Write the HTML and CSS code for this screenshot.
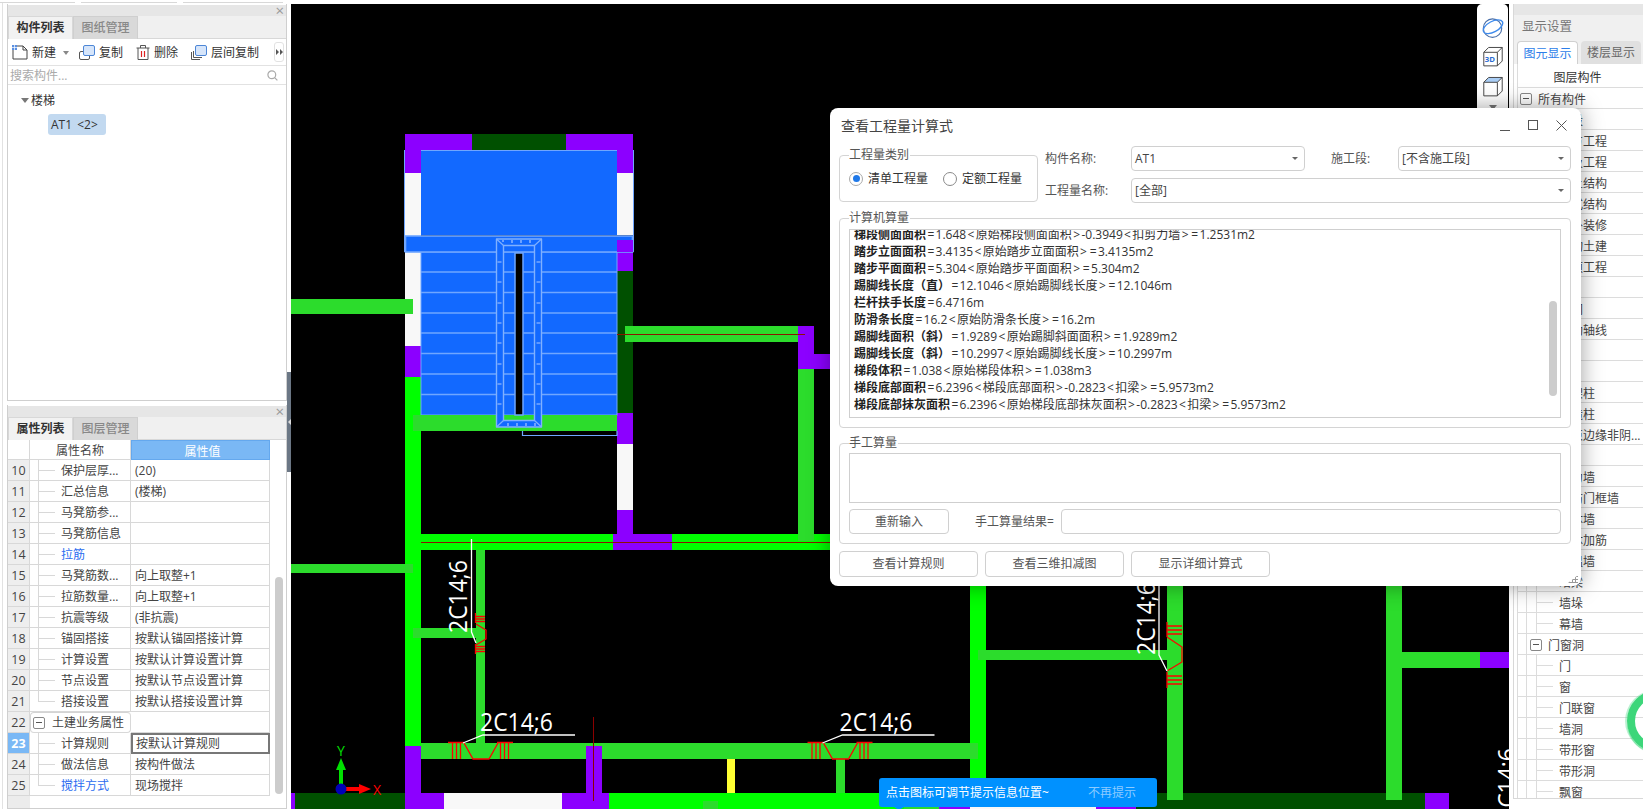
FILE: index.html
```html
<!DOCTYPE html>
<html lang="zh-CN">
<head>
<meta charset="utf-8">
<title>查看工程量计算式</title>
<link rel="stylesheet" href="styles.css">
</head>
<body>
<div class="app">
  <aside class="left">
    <div class="top-ticks"><i class="t1"></i><i class="t2"></i><i class="t3"></i></div>
    <section class="panel list-panel">
      <div class="dock-bar"><span class="dock-x">×</span></div>
      <div class="tabs"><span class="tab on">构件列表</span><span class="tab">图纸管理</span></div>
      <div class="tools">
        <span class="tool tool-new">
          <svg width="16" height="15" viewBox="0 0 16 15"><path d="M1 3V14H15V5L11 1H4" fill="#fff" stroke="#444"/><path d="M11 1V5H15" fill="none" stroke="#444"/><rect x="0" y="0" width="5" height="5" fill="#5b8fe0"/><path d="M0 2.5H5M2.5 0V5" stroke="#fff" stroke-width=".7"/></svg>
          新建<i class="tool-caret"></i>
        </span>
        <span class="tool tool-copy">
          <svg width="16" height="15" viewBox="0 0 16 15"><rect x=".5" y="6.5" width="10" height="8" rx="1.5" fill="#fff" stroke="#555"/><rect x="4.5" y=".5" width="11" height="10" rx="1.5" fill="#d6e5fa" stroke="#4d86d6"/></svg>
          复制
        </span>
        <span class="tool tool-del">
          <svg width="14" height="15" viewBox="0 0 14 15"><path d="M.5 3H13.5M4.5 3V.5H9.5V3M2 3V14.5H12V3" fill="none" stroke="#555"/><path d="M5.5 6V12M8.5 6V12" stroke="#d22" stroke-width="1.2"/></svg>
          删除
        </span>
        <span class="tool">
          <svg width="16" height="15" viewBox="0 0 16 15"><path d="M.5 7V14.5H9M2.5 6V12.5H11" fill="none" stroke="#555"/><rect x="4.5" y=".5" width="11" height="10" rx="1.5" fill="#d6e5fa" stroke="#4d86d6"/></svg>
          层间复制
        </span>
        <span class="more"><svg width="7" height="6" viewBox="0 0 7 6"><path d="M0 0L3 3L0 6ZM4 0L7 3L4 6Z" fill="#555"/></svg></span>
      </div>
      <div class="search"><span>搜索构件...</span>
        <svg width="11" height="11" viewBox="0 0 11 11"><circle cx="4.8" cy="4.8" r="3.9" fill="none" stroke="#aaa" stroke-width="1.2"/><path d="M7.6 7.6L10.4 10.4" stroke="#aaa" stroke-width="1.2"/></svg>
      </div>
      <div class="tree">
        <div class="tree-head"><i class="down"></i>楼梯</div>
        <div class="tree-item">AT1 &lt;2&gt;</div>
      </div>
    </section>
    <section class="panel prop-panel">
      <div class="dock-bar"><span class="dock-x">×</span></div>
      <div class="tabs"><span class="tab on">属性列表</span><span class="tab">图层管理</span></div>
      <div class="prop-body">
        <div class="prop-table">
          <div class="pr head"><span class="no"></span><span class="nm">属性名称</span><span class="val">属性值</span></div>
          <div class="pr"><span class="no">10</span><span class="nm leaf">保护层厚...</span><span class="val">(20)</span></div>
          <div class="pr"><span class="no">11</span><span class="nm leaf">汇总信息</span><span class="val">(楼梯)</span></div>
          <div class="pr"><span class="no">12</span><span class="nm leaf">马凳筋参...</span><span class="val"></span></div>
          <div class="pr"><span class="no">13</span><span class="nm leaf">马凳筋信息</span><span class="val"></span></div>
          <div class="pr"><span class="no">14</span><span class="nm leaf link">拉筋</span><span class="val"></span></div>
          <div class="pr"><span class="no">15</span><span class="nm leaf">马凳筋数...</span><span class="val">向上取整+1</span></div>
          <div class="pr"><span class="no">16</span><span class="nm leaf">拉筋数量...</span><span class="val">向上取整+1</span></div>
          <div class="pr"><span class="no">17</span><span class="nm leaf">抗震等级</span><span class="val">(非抗震)</span></div>
          <div class="pr"><span class="no">18</span><span class="nm leaf">锚固搭接</span><span class="val">按默认锚固搭接计算</span></div>
          <div class="pr"><span class="no">19</span><span class="nm leaf">计算设置</span><span class="val">按默认计算设置计算</span></div>
          <div class="pr"><span class="no">20</span><span class="nm leaf">节点设置</span><span class="val">按默认节点设置计算</span></div>
          <div class="pr"><span class="no">21</span><span class="nm leaf last">搭接设置</span><span class="val">按默认搭接设置计算</span></div>
          <div class="pr"><span class="no">22</span><span class="nm group"><i class="box"></i>土建业务属性</span><span class="val"></span></div>
          <div class="pr"><span class="no sel">23</span><span class="nm leaf">计算规则</span><span class="val editing">按默认计算规则</span></div>
          <div class="pr"><span class="no">24</span><span class="nm leaf">做法信息</span><span class="val">按构件做法</span></div>
          <div class="pr"><span class="no">25</span><span class="nm leaf last link">搅拌方式</span><span class="val">现场搅拌</span></div>
          <div class="pr foot"><span class="no"></span></div>
        </div>
        <div class="vbar"></div>
      </div>
    </section>
    <div class="split"><i></i></div>
  </aside>

  <svg class="canvas" width="1218" height="805" viewBox="291 4 1218 805">
    <g fill="#8c00ff">
      <rect x="405" y="134" width="67" height="16"/><rect x="405" y="134" width="16" height="39"/>
      <rect x="566" y="134" width="67" height="16"/><rect x="617" y="134" width="16" height="39"/>
      <rect x="405" y="346" width="16" height="31"/>
      <rect x="617" y="240" width="16" height="31"/><rect x="617" y="413" width="16" height="31"/><rect x="617" y="510" width="16" height="30"/>
      <rect x="798" y="326" width="16" height="43"/><rect x="814" y="354" width="20" height="15"/>
    </g>
    <g fill="#f8f8f8">
      <rect x="405" y="173" width="16" height="173"/><rect x="617" y="173" width="16" height="62"/><rect x="617" y="444" width="16" height="66"/>
    </g>
    <g fill="#005000">
      <rect x="472" y="134" width="94" height="16"/><rect x="617" y="271" width="16" height="142"/>
    </g>
    <rect x="405" y="377" width="16" height="369" fill="#00ff00"/>
    <path d="M404.5 150V252M633.5 150V252" fill="none" stroke="#6fa6ff"/>
    <rect x="421" y="150" width="196" height="85" fill="#1269ff"/>
    <path d="M421 150.5H617" stroke="#6fa6ff"/>
    <rect x="421" y="252" width="196" height="163" fill="#1269ff" stroke="#6fa6ff"/>
    <path d="M421 272H617M421 292.5H617M421 313H617M421 333H617M421 353.5H617M421 374H617M421 394.5H617" stroke="#6fa6ff" stroke-width="1.4"/>
    <rect x="405.5" y="236" width="227" height="16" fill="#1269ff" stroke="#6fa6ff" stroke-width="1.6"/>
    <rect x="617" y="240" width="16" height="12" fill="#8c00ff"/>
    <rect x="413" y="415" width="204" height="16" fill="#2cdc2c"/>
    <path d="M522.5 431V435.5H617V431" fill="none" stroke="#6fa6ff" stroke-width="1.2"/>
    <path d="M496.5 239H541.5V427H496.5ZM503.5 245.5V420.5H534.5V245.5Z" fill="#1269ff" fill-rule="evenodd" stroke="#7fb0ff" stroke-width="1.4" stroke-linejoin="round"/>
    <path d="M496.5 239L503.5 245.5M541.5 239L534.5 245.5M496.5 427L503.5 420.5M541.5 427L534.5 420.5" stroke="#7fb0ff" stroke-width="1.2"/>
    <path d="M497.5 262H501.5M497.5 282H501.5M497.5 303H501.5M497.5 323H501.5M497.5 343H501.5M497.5 364H501.5M497.5 384H501.5M497.5 404H501.5M536.5 262H540.5M536.5 282H540.5M536.5 303H540.5M536.5 323H540.5M536.5 343H540.5M536.5 364H540.5M536.5 384H540.5M536.5 404H540.5M503 242V240M512 243V240M521 243V240M530 243V240M508 426V423M517 426V423M526 426V423M535 426V423" stroke="#a9c8ff" stroke-width="1.2"/>
    <rect x="515" y="253" width="8" height="162" fill="#000" stroke="#6fa6ff" stroke-width="1.5"/>

    <rect x="291" y="299" width="122" height="15" fill="#2cdc2c"/>
    <rect x="625" y="326" width="173" height="16" fill="#2cdc2c"/>
    <path d="M617 334.5H805" stroke="#8b1500"/>
    <rect x="798" y="369" width="16" height="172" fill="#2cdc2c"/>

    <rect x="421" y="534" width="409" height="16" fill="#00ff00"/>
    <rect x="613" y="534" width="59" height="16" fill="#8c00ff"/>
    <rect x="798" y="534" width="16" height="7" fill="#2cdc2c"/>
    <path d="M421 542.5H830" stroke="#8b1500"/>
    <rect x="291" y="564" width="122" height="9" fill="#2cdc2c"/>
    <rect x="413" y="628" width="63" height="10" fill="#2cdc2c"/>
    <rect x="476" y="550" width="9" height="193" fill="#2cdc2c"/>
    <rect x="970" y="560" width="16" height="233" fill="#00ff00"/>
    <rect x="421" y="743" width="557" height="16" fill="#2cdc2c"/>
    <rect x="978" y="650" width="189" height="10" fill="#2cdc2c"/>
    <rect x="1167" y="560" width="16" height="240" fill="#2cdc2c"/>
    <rect x="1386" y="560" width="16" height="240" fill="#2cdc2c"/>
    <rect x="1402" y="652" width="78" height="16" fill="#2cdc2c"/>
    <rect x="1480" y="652" width="29" height="16" fill="#8c00ff"/>
    <rect x="727" y="759" width="8" height="34" fill="#ffff33"/>
    <rect x="836" y="759" width="9" height="42" fill="#2cdc2c"/>

    <rect x="291" y="793" width="4" height="16" fill="#8c00ff"/>
    <rect x="295" y="793" width="110" height="16" fill="#005000"/>
    <rect x="405" y="746" width="16" height="63" fill="#8c00ff"/>
    <rect x="421" y="793" width="23" height="16" fill="#8c00ff"/>
    <rect x="444" y="793" width="118" height="16" fill="#f8f8f8"/>
    <rect x="562" y="793" width="47" height="16" fill="#8c00ff"/>
    <rect x="586" y="746" width="16" height="47" fill="#8c00ff"/>
    <rect x="609" y="793" width="295" height="16" fill="#00ff00"/>
    <rect x="703" y="801" width="15" height="8" fill="#2cdc2c"/>
    <rect x="904" y="793" width="35" height="16" fill="#2cdc2c"/>
    <rect x="939" y="793" width="31" height="16" fill="#8c00ff"/>
    <rect x="970" y="793" width="126" height="16" fill="#f8f8f8"/>
    <rect x="1096" y="793" width="40" height="16" fill="#8c00ff"/>
    <rect x="1136" y="793" width="289" height="16" fill="#005000"/>
    <rect x="1425" y="793" width="24" height="16" fill="#8c00ff"/>
    <rect x="1167" y="793" width="16" height="7" fill="#2cdc2c"/>
    <rect x="1386" y="793" width="16" height="7" fill="#2cdc2c"/>
    <path d="M593.5 717V801" stroke="#8b0000"/>

    <defs>
      <g id="rebar-h" fill="none" stroke="#ff0000" stroke-width="1.3">
        <path d="M448 742.5H464M452.5 743V759M456.5 743V759M460.5 743V759"/>
        <path d="M497 742.5H513M500.5 743V759M504.5 743V759M508.5 743V759"/>
        <path d="M464 743L473 759H489L498 743"/>
        <path d="M463 743L483 735H575" stroke="#fff"/>
      </g>
    </defs>
    <use href="#rebar-h"/>
    <use href="#rebar-h" x="359.5"/>
    <g fill="none" stroke="#ff0000" stroke-width="1.3">
      <path d="M475.5 613V623M475 616.5H485M475 619H485M475 621.5H485"/>
      <path d="M476 624L486 630V639L476 645"/>
      <path d="M475.5 644V654M475 646.5H485M475 649H485M475 651.5H485"/>
      <path d="M1167 622V637M1167 626H1182M1167 630H1182M1167 634H1182"/>
      <path d="M1167 637L1182 647V662L1167 671"/>
      <path d="M1167 672V688M1167 676H1182M1167 680H1182M1167 684H1182"/>
    </g>
    <g fill="none" stroke="#fff" stroke-width="1.3">
      <path d="M471.5 539V632L476 643"/>
      <path d="M1159 540V655L1167 671"/>
    </g>
    <g class="cad-label" fill="#fff">
      <text x="480" y="731" textLength="73" lengthAdjust="spacingAndGlyphs">2C14;6</text>
      <text x="839.5" y="731" textLength="73" lengthAdjust="spacingAndGlyphs">2C14;6</text>
      <text transform="translate(467 633) rotate(-90)" textLength="73" lengthAdjust="spacingAndGlyphs">2C14;6</text>
      <text transform="translate(1155 655) rotate(-90)" textLength="73" lengthAdjust="spacingAndGlyphs">2C14;6</text>
      <text transform="translate(1516 821) rotate(-90)" textLength="73" lengthAdjust="spacingAndGlyphs">2C14;6</text>
    </g>
    <path d="M341 784V768" stroke="#00e000" stroke-width="4"/>
    <path d="M336 770H346L341 758Z" fill="#00e000"/>
    <path d="M346 789H361" stroke="#ff0000" stroke-width="4"/>
    <path d="M359 784V794L371 789Z" fill="#ff0000"/>
    <circle cx="341" cy="789" r="5.5" fill="#0000b8"/>
    <text class="axis" x="341" y="756" fill="#00e000" text-anchor="middle">Y</text>
    <text class="axis" x="377" y="795" fill="#ff0000" text-anchor="middle">X</text>
  </svg>

  <aside class="right">
    <div class="right-in">
      <div class="dock-bar"></div>
      <div class="r-title">显示设置</div>
      <div class="r-tabs"><span class="r-tab on">图元显示</span><span class="r-tab">楼层显示</span></div>
      <div class="r-grid">
        <div class="r-head">图层构件</div>
        <div class="r top"><i class="box"></i>所有构件</div>
        <div class="r l1">施工段</div>
        <div class="r l1">土石方工程</div>
        <div class="r l1">基础及工程</div>
        <div class="r l1">混凝土结构</div>
        <div class="r l1">装配式结构</div>
        <div class="r l1">室内外装修</div>
        <div class="r l1">构筑物土建</div>
        <div class="r l1">措施项工程</div>
        <div class="r l1"></div>
        <div class="r l2">轴网</div>
        <div class="r l2">辅助轴线</div>
        <div class="r l1"></div>
        <div class="r l1"></div>
        <div class="r l2">框架柱</div>
        <div class="r l2">构造柱</div>
        <div class="r l2">约束边缘非阴...</div>
        <div class="r l1"></div>
        <div class="r l2">剪力墙</div>
        <div class="r l2">人防门框墙</div>
        <div class="r l2">砌体墙</div>
        <div class="r l2">砌体加筋</div>
        <div class="r l2">保温墙</div>
        <div class="r l2">暗梁</div>
        <div class="r l2">墙垛</div>
        <div class="r l2">幕墙</div>
        <div class="r grp"><i class="box"></i>门窗洞</div>
        <div class="r l2">门</div>
        <div class="r l2">窗</div>
        <div class="r l2">门联窗</div>
        <div class="r l2">墙洞</div>
        <div class="r l2">带形窗</div>
        <div class="r l2">带形洞</div>
        <div class="r l2">飘窗</div>
      </div>
    </div>
  </aside>

  <div class="view-tools">
    <svg width="24" height="22" viewBox="0 0 24 22"><circle cx="11.5" cy="11.5" r="9.5" fill="none" stroke="#4a6fa8" stroke-width="1.2"/><ellipse cx="12" cy="10" rx="11" ry="5.5" transform="rotate(-28 12 10)" fill="none" stroke="#3f8bec" stroke-width="1.4"/></svg>
    <svg width="22" height="22" viewBox="0 0 22 22"><path d="M1.5 6.5L6.5 1.5H20.5V15.5L15.5 20.5H1.5ZM1.5 6.5H15.5V20.5M15.5 6.5L20.5 1.5" fill="#fff" stroke="#444" stroke-linejoin="round"/><text x="2.5" y="17" class="cube-text">3D</text></svg>
    <svg width="22" height="22" viewBox="0 0 22 22"><path d="M1.5 6.5L6.5 1.5H20.5L15.5 6.5Z" fill="#a9cdf5"/><path d="M1.5 6.5L6.5 1.5H20.5V15.5L15.5 20.5H1.5ZM1.5 6.5H15.5V20.5M15.5 6.5L20.5 1.5" fill="none" stroke="#444" stroke-linejoin="round"/></svg>
    <i class="down dark"></i>
  </div>

  <div class="ring"></div>

  <div class="dialog">
    <header class="dlg-head">
      <h1>查看工程量计算式</h1>
      <div class="win-btns">
        <svg width="10" height="11" viewBox="0 0 10 11"><path d="M0 10.5H10" stroke="#555"/></svg>
        <svg width="10" height="11" viewBox="0 0 10 11"><rect x=".5" y=".5" width="9" height="9" fill="none" stroke="#555"/></svg>
        <svg width="11" height="11" viewBox="0 0 11 11"><path d="M.5 .5L10.5 10.5M10.5 .5L.5 10.5" stroke="#555"/></svg>
      </div>
    </header>
    <div class="dlg-top">
      <div class="group kind">
        <span class="legend">工程量类别</span>
        <label class="radio"><i class="dot on"></i>清单工程量</label>
        <label class="radio"><i class="dot"></i>定额工程量</label>
      </div>
      <div class="form">
        <span>构件名称:</span>
        <div class="combo">AT1</div>
        <span class="lb2">施工段:</span>
        <div class="combo">[不含施工段]</div>
        <span>工程量名称:</span>
        <div class="combo wide">[全部]</div>
      </div>
    </div>
    <div class="group auto">
      <span class="legend">计算机算量</span>
      <div class="lines-box">
        <div class="lines">
          <p><b>梯段侧面面积</b><span class="op">=</span>1.648<span class="op">&lt;</span>原始梯段侧面面积<span class="op">&gt;</span>-0.3949<span class="op">&lt;</span>扣剪力墙<span class="op">&gt;</span><span class="op">=</span>1.2531m2</p>
          <p><b>踏步立面面积</b><span class="op">=</span>3.4135<span class="op">&lt;</span>原始踏步立面面积<span class="op">&gt;</span><span class="op">=</span>3.4135m2</p>
          <p><b>踏步平面面积</b><span class="op">=</span>5.304<span class="op">&lt;</span>原始踏步平面面积<span class="op">&gt;</span><span class="op">=</span>5.304m2</p>
          <p><b>踢脚线长度（直）</b><span class="op">=</span>12.1046<span class="op">&lt;</span>原始踢脚线长度<span class="op">&gt;</span><span class="op">=</span>12.1046m</p>
          <p><b>栏杆扶手长度</b><span class="op">=</span>6.4716m</p>
          <p><b>防滑条长度</b><span class="op">=</span>16.2<span class="op">&lt;</span>原始防滑条长度<span class="op">&gt;</span><span class="op">=</span>16.2m</p>
          <p><b>踢脚线面积（斜）</b><span class="op">=</span>1.9289<span class="op">&lt;</span>原始踢脚斜面面积<span class="op">&gt;</span><span class="op">=</span>1.9289m2</p>
          <p><b>踢脚线长度（斜）</b><span class="op">=</span>10.2997<span class="op">&lt;</span>原始踢脚线长度<span class="op">&gt;</span><span class="op">=</span>10.2997m</p>
          <p><b>梯段体积</b><span class="op">=</span>1.038<span class="op">&lt;</span>原始梯段体积<span class="op">&gt;</span><span class="op">=</span>1.038m3</p>
          <p><b>梯段底部面积</b><span class="op">=</span>6.2396<span class="op">&lt;</span>梯段底部面积<span class="op">&gt;</span>-0.2823<span class="op">&lt;</span>扣梁<span class="op">&gt;</span><span class="op">=</span>5.9573m2</p>
          <p><b>梯段底部抹灰面积</b><span class="op">=</span>6.2396<span class="op">&lt;</span>原始梯段底部抹灰面积<span class="op">&gt;</span>-0.2823<span class="op">&lt;</span>扣梁<span class="op">&gt;</span><span class="op">=</span>5.9573m2</p>
        </div>
        <div class="lines-bar"></div>
      </div>
    </div>
    <div class="group manual">
      <span class="legend">手工算量</span>
      <div class="memo"></div>
      <div class="manual-row">
        <span class="btn reinput">重新输入</span>
        <span class="result-lb">手工算量结果=</span>
        <div class="result"></div>
      </div>
    </div>
    <div class="dlg-btns">
      <span class="btn">查看计算规则</span>
      <span class="btn">查看三维扣减图</span>
      <span class="btn">显示详细计算式</span>
    </div>
    <div class="grip"></div>
  </div>

  <div class="toast"><span>点击图标可调节提示信息位置~</span><span class="toast-off">不再提示</span></div>
</div>
</body>
</html>
```
FILE: styles.css
```css
* { box-sizing: border-box; }
html, body { margin: 0; padding: 0; background: #fff; }
body { font: 12px/21px "Open Sans", "Noto Sans CJK SC", sans-serif; color: #444; }
i { font-style: normal; display: block; }

.app { position: relative; display: flex; width: 1643px; height: 809px; overflow: hidden; background: #fff; }

/* left column */
.left { position: relative; flex: none; width: 291px; height: 809px; display: flex; flex-direction: column; padding-left: 7px; background: #fff; }
.left::before { content: ""; position: absolute; left: 2px; top: 3px; bottom: 0; width: 1px; background: #e2e2e2; }
.top-ticks { position: absolute; left: 0; top: 0; display: flex; gap: 6px; }
.top-ticks i { height: 3px; border-bottom: 1px solid #d8d8d8; }
.t1 { width: 75px; } .t2 { width: 96px; } .t3 { width: 100px; }
.panel { width: 280px; border: 1px solid #cfcfcf; border-top: 0; background: #fff; }
.list-panel { height: 397px; margin-top: 4px; }
.prop-panel { height: 404px; margin-top: 4px; }
.dock-bar { position: relative; height: 11px; margin-top: 1px; background: #e6e6e6; }
.dock-x { position: absolute; right: 2px; top: -5px; color: #9a9a9a; font-size: 15px; line-height: 20px; }
.tabs { display: flex; height: 23px; background: #f0f0f0; border-bottom: 1px solid #d8d8d8; }
.tab { width: 65px; height: 23px; background: #d9d9d9; border: 1px solid #cfcfcf; border-bottom: 0; color: #888; text-align: center; line-height: 22px; font-weight: 500; }
.tab.on { background: #f2f2f2; color: #333; border-color: #d8d8d8; font-weight: 700; }

.tools { position: relative; display: flex; align-items: center; gap: 12px; height: 27px; padding: 1px 0 0 4px; border-bottom: 1px solid #e2e2e2; color: #333; }
.tool { display: flex; align-items: center; gap: 4px; }
.tool-new { margin-right: -2px; }
.tool-copy { margin-right: 1px; }
.tool-del { margin-right: 1px; }
.tool-caret { width: 0; height: 0; margin-left: 3px; border: 3px solid transparent; border-top: 4px solid #888; border-bottom: 0; }
.more { position: absolute; right: 2px; top: 3px; display: flex; align-items: center; justify-content: center; width: 10px; height: 20px; border: 1px solid #e2e2e2; border-radius: 3px; }
.search { display: flex; align-items: center; justify-content: space-between; height: 19px; padding: 1px 8px 0 2px; border-bottom: 1px solid #e2e2e2; color: #aaa; line-height: 18px; }
.tree { padding: 4px 0 0 13px; }
.down { width: 0; height: 0; border: 4px solid transparent; border-top: 5px solid #777; border-bottom: 0; }
.tree-head { display: flex; align-items: center; gap: 2px; height: 21px; padding-top: 1px; color: #333; }
.tree-item { width: 58px; height: 21px; margin: 4px 0 0 27px; padding-left: 3px; background: #c2d9f0; border-radius: 3px; color: #333; white-space: nowrap; word-spacing: 2px; }

/* property grid */
.prop-body { position: relative; }
.prop-table { width: 262px; }
.pr { display: grid; grid-template-columns: 22px 101px 139px; height: 21px; }
.pr > span { border-right: 1px solid #d8d8d8; border-bottom: 1px solid #d8d8d8; height: 21px; line-height: 22px; white-space: nowrap; overflow: hidden; }
.no { background: #eeeeee; text-align: center; font-size: 12.5px; color: #444; }
.no.sel { background: #7ab8f5; color: #fff; font-weight: 700; }
.nm { padding-left: 31px; }
.val { padding-left: 4px; }
.pr.head > span { height: 20px; line-height: 21px; }
.pr.head { height: 20px; }
.head .no { background: #fff; }
.head .nm { padding-left: 26px; }
.head .val { background: #7ab8f5; color: #fff; text-align: center; border: 1px solid #64a8ee; }
.leaf { background-image: linear-gradient(#d8d8d8, #d8d8d8), linear-gradient(#d8d8d8, #d8d8d8); background-size: 1px 100%, 16px 1px; background-position: 8px 0, 9px 10px; background-repeat: no-repeat; }
.leaf.last { background-size: 1px 11px, 16px 1px; }
.link { color: #2b6cf0; }
.nm.group { display: flex; align-items: center; gap: 7px; padding-left: 2px; padding-top: 1px; }
.box { position: relative; flex: none; width: 12px; height: 12px; border: 1px solid #888; border-radius: 2px; background: #fff; }
.box::after { content: ""; position: absolute; left: 2px; right: 2px; top: 4px; height: 1px; background: #555; }
.pr > .val.editing { border: 2px solid #777; line-height: 18px; padding-left: 3px; }
.pr.foot { height: 12px; }
.pr.foot .no { height: 12px; background: #ececec; border: 0; }
.vbar { position: absolute; left: 267px; top: 137px; width: 8px; height: 217px; background: #cccccc; border-radius: 4px; }

.split { position: absolute; left: 287px; top: 372px; width: 4px; height: 100px; background: #6b7785; }
.split i { position: absolute; left: 1px; top: 47px; width: 0; height: 0; border: 3px solid transparent; border-right: 3px solid #ddd; border-left: 0; }

/* canvas */
.canvas { flex: none; display: block; margin-top: 4px; background: #000; }
.cad-label text { font-family: "Open Sans", sans-serif; font-size: 25px; font-weight: 400; }
.axis { font-family: "Open Sans", sans-serif; font-size: 14px; }
.cube-text { font-family: "Open Sans", sans-serif; font-size: 8px; font-weight: 700; fill: #2a6cd0; }

/* right column */
.right { flex: none; width: 134px; height: 809px; padding: 4px 0 10px 4px; background: #fff; }
.right-in { height: 795px; border-left: 1px solid #d8d8d8; border-bottom: 1px solid #d8d8d8; overflow: hidden; background: #fff; }
.right-in .dock-bar { margin-top: 0; }
.r-title { height: 22px; padding-left: 8px; background: #f0f0f0; color: #777; line-height: 24px; font-size: 12.5px; }
.r-tabs { display: flex; gap: 3px; height: 27px; padding: 4px 0 0 3px; background: #f0f0f0; }
.r-tab { width: 60px; height: 23px; border-radius: 4px 4px 0 0; background: #e0e0e0; color: #666; text-align: center; line-height: 24px; }
.r-tab.on { width: 61px; background: #fff; color: #2b7de9; border: 1px solid #d0d0d0; border-bottom: 0; line-height: 23px; }
.r-grid { margin-left: 3px; border-left: 1px solid #dcdcdc; }
.r-head { height: 24px; border-bottom: 1px solid #dcdcdc; text-align: center; padding-right: 6px; line-height: 27px; color: #333; }
.r { display: flex; align-items: center; height: 21px; padding-top: 2px; border-bottom: 1px solid #dcdcdc; color: #444; white-space: nowrap; overflow: hidden; background-image: linear-gradient(#dcdcdc, #dcdcdc), linear-gradient(#dcdcdc, #dcdcdc), linear-gradient(#dcdcdc, #dcdcdc); background-repeat: no-repeat; background-size: 1px 100%, 1px 100%, 16px 1px; background-position: 8px 0, 18px 0, 19px 10px; }
.r.top { padding-left: 2px; gap: 6px; background-image: none; }
.r.l1 { padding-left: 29px; background-size: 1px 100%, 0 0, 14px 1px; background-position: 8px 0, 0 0, 9px 10px; }
.r.l2 { padding-left: 41px; }
.r.grp { padding-left: 12px; gap: 6px; background-size: 1px 100%, 0 0, 0 0; }

.view-tools { position: absolute; left: 1477px; top: 4px; width: 31px; height: 106px; display: flex; flex-direction: column; align-items: center; gap: 8px; padding-top: 13px; background: #fff; border-radius: 5px 5px 0 0; }

.ring { position: absolute; left: 1627px; top: 690px; width: 62px; height: 62px; border: 8px solid #3dd67a; border-radius: 50%; box-shadow: 0 2px 0 rgba(61, 214, 122, .45), -2px 0 0 rgba(61, 214, 122, .35); }

/* dialog */
.dialog { position: absolute; left: 830px; top: 108px; width: 751px; height: 478px; padding: 0 10px 0 9px; background: #fff; border-radius: 8px; box-shadow: 0 0 22px rgba(0, 0, 0, .38); }
.dlg-head { position: relative; display: flex; justify-content: space-between; height: 38px; padding: 9px 4px 0 2px; }
h1 { margin: 0; font-size: 14px; font-weight: 400; line-height: 18px; color: #444; }
.win-btns { display: flex; gap: 18px; margin-top: 3px; align-items: flex-start; }
.dlg-top { display: flex; height: 57px; }
.group { position: relative; border: 1px solid #d4d4d4; border-radius: 4px; }
.legend { position: absolute; left: 9px; top: -9px; padding-right: 1px; background: #fff; line-height: 16px; color: #555; }
.kind { display: flex; align-items: center; gap: 15px; flex: none; width: 199px; height: 47px; margin-top: 9px; padding-left: 9px; }
.radio { display: flex; align-items: center; gap: 5px; color: #333; }
.dot { position: relative; width: 14px; height: 14px; border: 1px solid #8a8a8a; border-radius: 50%; }
.dot.on { border-color: #a9a9a9; }
.dot.on::after { content: ""; position: absolute; left: 2.5px; top: 2.5px; width: 7px; height: 7px; border-radius: 50%; background: #1f78e8; }
.form { flex: 1; display: grid; grid-template-columns: 86px 174px 93px 173px; grid-template-rows: 25px 25px; row-gap: 7px; margin-left: 7px; align-items: center; color: #555; }
.lb2 { padding-left: 26px; }
.combo { position: relative; height: 25px; padding-left: 3px; border: 1px solid #d0d0d0; border-radius: 4px; line-height: 23px; color: #444; }
.combo::after { content: ""; position: absolute; right: 6px; top: 10px; width: 0; height: 0; border: 3px solid transparent; border-top: 3px solid #666; border-bottom: 0; }
.combo.wide { grid-column: 2 / 5; }
.auto { height: 210px; margin-top: 15px; padding: 10px 9px; }
.lines-box { position: relative; height: 189px; border: 1px solid #cfcfcf; overflow: hidden; }
.lines { margin-top: -4px; padding-left: 4px; }
.lines p { margin: 0; height: 17px; line-height: 17px; color: #333; white-space: nowrap; }
.lines b { font-weight: 700; color: #222; }
.op { display: inline-block; width: 9.6px; text-align: center; }
.lines-bar { position: absolute; right: 3px; top: 71px; width: 8px; height: 95px; border-radius: 4px; background: #cccccc; }
.manual { height: 101px; margin-top: 15px; padding: 9px 9px 0; }
.memo { height: 50px; border: 1px solid #cfcfcf; }
.manual-row { display: flex; align-items: center; margin-top: 6px; }
.btn { display: block; height: 25px; border: 1px solid #d0d0d0; border-radius: 4px; text-align: center; line-height: 24px; color: #555; }
.reinput { flex: none; width: 100px; }
.result-lb { flex: none; width: 112px; padding-left: 26px; white-space: nowrap; color: #555; }
.result { flex: 1; height: 25px; border: 1px solid #d0d0d0; border-radius: 4px; }
.dlg-btns { display: flex; gap: 7px; margin-top: 7px; }
.dlg-btns .btn { width: 139px; height: 26px; }
.grip { position: absolute; right: 3px; bottom: 3px; width: 10px; height: 8px; background-image: radial-gradient(circle, #999 1px, transparent 1.1px); background-size: 3px 3px; clip-path: polygon(100% 0, 100% 100%, 0 100%); }

/* toast */
.toast { position: absolute; left: 879px; top: 778px; display: flex; width: 278px; height: 29px; padding-left: 7px; background: #0091ff; border-radius: 3px; color: #fff; line-height: 29px; }
.toast::after { content: ""; position: absolute; left: 15px; top: 29px; width: 0; height: 0; border: 5px solid transparent; border-top: 3px solid #0091ff; border-bottom: 0; }
.toast-off { margin-left: 39px; color: #8ccbff; }
```
